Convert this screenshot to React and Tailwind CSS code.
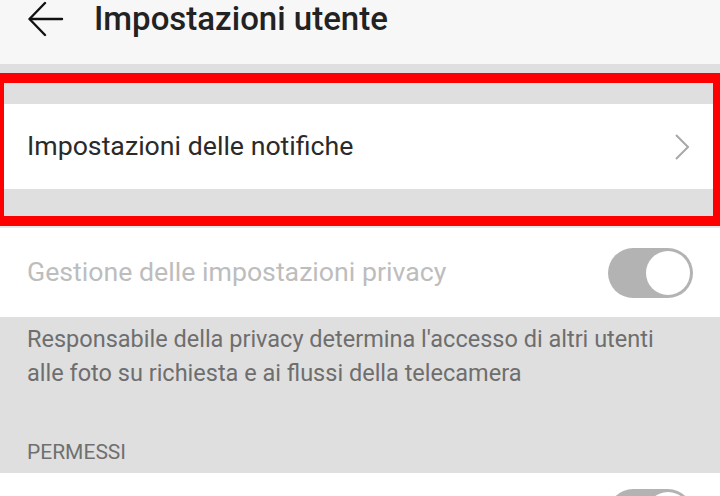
import React from 'react';

const Toggle = () => (
  <div className="w-[85px] h-[50px] rounded-full bg-[#b3b3b3] flex items-center justify-end pr-[3px]">
    <div className="w-[44px] h-[44px] rounded-full bg-white"></div>
  </div>
);

export default function App() {
  return (
    <div className="w-[720px] h-[496px] overflow-hidden bg-white" style={{ fontFamily: 'Roboto, "Noto Sans", sans-serif' }}>
      {/* header */}
      <div className="h-[64px] bg-[#f7f7f7] flex items-start pt-[1px]">
        <svg className="ml-[28px] mt-0" width="36" height="36" viewBox="0 0 36 36" fill="none" stroke="#111" strokeWidth="2.4" strokeLinecap="round" strokeLinejoin="round">
          <path d="M34 18H2" />
          <path d="M17 2L1.5 18L17 34" />
        </svg>
        <div className="ml-[30px] text-[33px] leading-[36px] font-medium text-[#222]">Impostazioni utente</div>
      </div>

      <div className="h-[9px] bg-[#dfdfdf]"></div>

      {/* highlighted row */}
      <div className="border-t-[10px] border-b-[10px] border-l-[4px] border-r-[7px] border-[#ff0000] bg-[#dfdfdf]">
        <div className="h-[21px]"></div>
        <div className="h-[85px] bg-white flex items-center justify-between pl-[23px] pr-[23px]">
          <span className="text-[26.7px] text-[#2a2a2a]">Impostazioni delle notifiche</span>
          <svg width="16" height="28" viewBox="0 0 16 28" fill="none" stroke="#a8a8a8" strokeWidth="2">
            <path d="M2 2L14 14L2 26" />
          </svg>
        </div>
        <div className="h-[27px]"></div>
      </div>

      <div className="h-[2px] bg-[#e8e8e8]"></div>

      {/* privacy row */}
      <div className="h-[89px] bg-white flex items-center justify-between pl-[27px] pr-[27px]">
        <span className="text-[26.7px] text-[#bdbdbd]">Gestione delle impostazioni privacy</span>
        <Toggle />
      </div>

      <div className="h-[156px] bg-[#dfdfdf] pl-[27px] pt-[5px] flex flex-col">
        <p className="text-[23.5px] leading-[34px] text-[#6e6e6e]">
          Responsabile della privacy determina l'accesso di altri utenti<br />
          alle foto su richiesta e ai flussi della telecamera
        </p>
        <span className="mt-auto mb-[5px] text-[21px] text-[#707070]">PERMESSI</span>
      </div>

      <div className="bg-white flex justify-end pr-[27px] pt-[16px]">
        <Toggle />
      </div>
    </div>
  );
}
